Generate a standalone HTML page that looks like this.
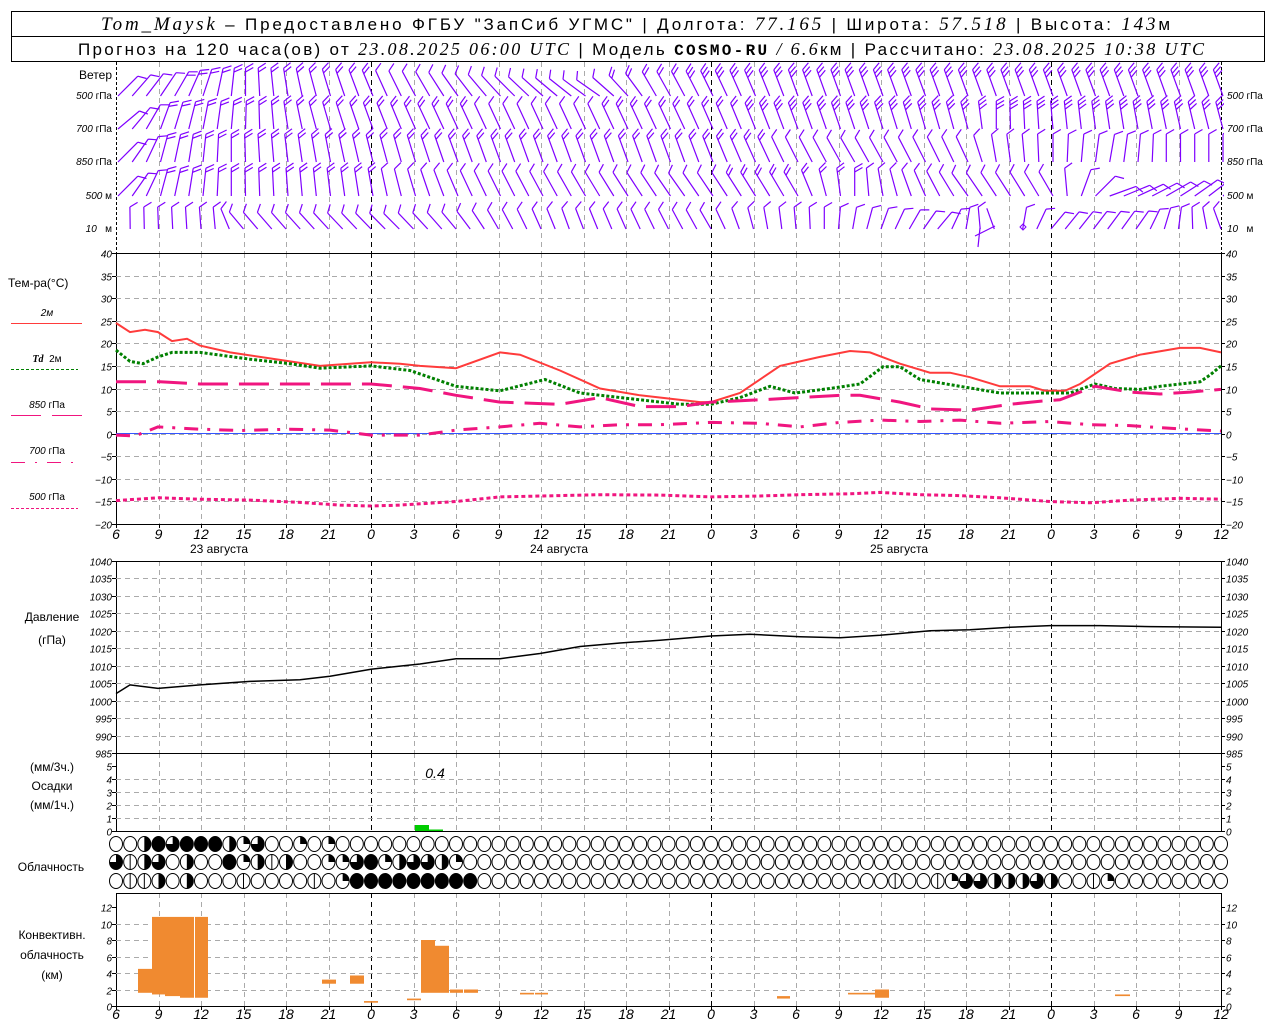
<!DOCTYPE html>
<html><head><meta charset="utf-8"><style>
html,body{margin:0;padding:0;background:#fff;width:1280px;height:1024px;overflow:hidden}
svg{display:block}
.l{font-family:"Liberation Sans",sans-serif;font-size:12px;fill:#000}
.n{font-family:"Liberation Sans",sans-serif;font-style:italic;font-size:10px;fill:#000}
.ax{font-family:"Liberation Sans",sans-serif;font-style:italic;font-size:14px;fill:#000}
.h{font-family:"Liberation Sans",sans-serif;font-size:17px;fill:#000}
.i{font-family:"Liberation Serif",serif;font-style:italic}
</style></head><body>
<svg id="s" width="1280" height="1024" xmlns="http://www.w3.org/2000/svg">
<defs><clipPath id="wc"><rect x="114" y="62" width="1110" height="190"/></clipPath></defs>
<rect x="11.5" y="11.5" width="1253" height="25" fill="none" stroke="#000"/>
<rect x="11.5" y="36.5" width="1253" height="25" fill="none" stroke="#000"/>
<text class="h" x="101" y="30" textLength="1069" lengthAdjust="spacing"><tspan class="i" font-size="19">Tom_Maysk</tspan> – Предоставлено ФГБУ "ЗапСиб УГМС" | Долгота: <tspan class="i" font-size="19">77.165</tspan> | Широта: <tspan class="i" font-size="19">57.518</tspan> | Высота: <tspan class="i" font-size="19">143</tspan>м</text>
<text class="h" x="78" y="55" textLength="1126" lengthAdjust="spacing">Прогноз на 120 часа(ов) от <tspan class="i" font-size="18">23.08.2025 06:00 UTC</tspan> | Модель <tspan font-family="Liberation Mono" font-weight="bold" font-size="16">COSMO-RU</tspan> <tspan class="i" font-size="18">/ 6.6</tspan>км | Рассчитано: <tspan class="i" font-size="18">23.08.2025 10:38 UTC</tspan></text>

<g id="grid"></g>
<g id="dyn"></g>
<g id="wind" clip-path="url(#wc)"></g>

<text class="l" x="112" y="79" text-anchor="end">Ветер</text>
<g class="n" text-anchor="end" font-size="11">
<text x="112" y="99">500 <tspan font-style="normal">гПа</tspan></text>
<text x="112" y="132">700 <tspan font-style="normal">гПа</tspan></text>
<text x="112" y="165">850 <tspan font-style="normal">гПа</tspan></text>
<text x="112" y="199">500 <tspan font-style="normal">м</tspan></text>
<text x="112" y="232">10 &#160; <tspan font-style="normal">м</tspan></text>
</g>
<g class="n" font-size="11">
<text x="1227" y="99">500 <tspan font-style="normal">гПа</tspan></text>
<text x="1227" y="132">700 <tspan font-style="normal">гПа</tspan></text>
<text x="1227" y="165">850 <tspan font-style="normal">гПа</tspan></text>
<text x="1227" y="199">500 <tspan font-style="normal">м</tspan></text>
<text x="1227" y="232">10 &#160; <tspan font-style="normal">м</tspan></text>
</g>
<text class="l" x="8" y="287">Тем-ра(°C)</text>
<text class="n" x="47" y="316" text-anchor="middle" font-style="normal" font-size="11">2м</text>
<line x1="11" y1="323.5" x2="82" y2="323.5" stroke="#ff3b3b"/>
<text class="n" x="47" y="362" text-anchor="middle" font-size="11"><tspan font-family="Liberation Serif" font-weight="bold">Td</tspan> <tspan font-style="normal">&#160;2м</tspan></text>
<line x1="11" y1="369.5" x2="78" y2="369.5" stroke="#008000" stroke-dasharray="3,2"/>
<text class="n" x="47" y="408" text-anchor="middle" font-size="11">850 <tspan font-style="normal">гПа</tspan></text>
<line x1="11" y1="415.5" x2="82" y2="415.5" stroke="#f0157f" stroke-dasharray="30,11"/>
<text class="n" x="47" y="454" text-anchor="middle" font-size="11">700 <tspan font-style="normal">гПа</tspan></text>
<line x1="11" y1="462.5" x2="78" y2="462.5" stroke="#f0157f" stroke-dasharray="14,10,2,10"/>
<text class="n" x="47" y="500" text-anchor="middle" font-size="11">500 <tspan font-style="normal">гПа</tspan></text>
<line x1="11" y1="508.5" x2="78" y2="508.5" stroke="#f0157f" stroke-dasharray="3,2"/>
<text class="l" x="52" y="621" text-anchor="middle">Давление</text>
<text class="l" x="52" y="644" text-anchor="middle">(гПа)</text>
<text class="l" x="52" y="771" text-anchor="middle">(мм/3ч.)</text>
<text class="l" x="52" y="790" text-anchor="middle">Осадки</text>
<text class="l" x="52" y="809" text-anchor="middle">(мм/1ч.)</text>
<text class="l" x="51" y="871" text-anchor="middle">Облачность</text>
<text class="l" x="52" y="939" text-anchor="middle">Конвективн.</text>
<text class="l" x="52" y="959" text-anchor="middle">облачность</text>
<text class="l" x="52" y="979" text-anchor="middle">(км)</text>
<text class="ax" x="435" y="778" text-anchor="middle" font-size="13">0.4</text>
<text class="l" x="219" y="553" text-anchor="middle" font-size="13">23 августа</text>
<text class="l" x="559" y="553" text-anchor="middle" font-size="13">24 августа</text>
<text class="l" x="899" y="553" text-anchor="middle" font-size="13">25 августа</text>
<g id="txt"></g>
</svg>
<script>
(function(){
var NS="http://www.w3.org/2000/svg";
var X0=116,X1=1221,PH=(1221-116)/78;
function xh(h){return X0+h*PH;}
var grid=document.getElementById('grid'),dyn=document.getElementById('dyn'),txt=document.getElementById('txt'),wind=document.getElementById('wind');
function el(p,t,a,s){var e=document.createElementNS(NS,t);for(var k in a)e.setAttribute(k,a[k]);if(s!=null)e.textContent=s;p.appendChild(e);return e;}
function line(p,x1,y1,x2,y2,c,d,w){var a={x1:x1,y1:y1,x2:x2,y2:y2,stroke:c||'#000','stroke-width':w||1};if(d)a['stroke-dasharray']=d;return el(p,'line',a);}
var G='#aaa';
var secs=[[62,253],[253,524],[561,753],[753,831],[893,1006]];
for(var k=0;k<=26;k++){
  var x=Math.round(xh(k*3))+.5, h=6+k*3, day=(h%24==0);
  secs.forEach(function(s,i){
    if(k==0||k==26){ if(i==0) line(grid,x,s[0],x,s[1],'#000','3,2'); else line(grid,x,s[0],x,s[1],'#000');}
    else line(grid,x,s[0],x,s[1],day?'#000':G,'5,4');
  });
}
function yaxis(top,bot,vmin,vmax,step,labs){
  var ppu=(bot-top)/(vmax-vmin);
  for(var v=vmin;v<=vmax+1e-9;v+=step){
    var y=Math.round(bot-(v-vmin)*ppu)+.5;
    if(v!=vmin&&v!=vmax) line(grid,X0,y,X1,y,G,'5,4');
    line(grid,X0-4,y,X0,y,'#000');line(grid,X1,y,X1+4,y,'#000');
    if(labs){el(txt,'text',{'class':'n',x:X0-4,y:y+4,'text-anchor':'end'},String(v).replace('-','−'));
    el(txt,'text',{'class':'n',x:X1+5,y:y+4},String(v).replace('-','−'));}
  }
}
yaxis(253,524,-20,40,5,true);
yaxis(561,753,985,1040,5,true);
yaxis(766,831,0,5,1,true);
yaxis(907,1006,0,12,2,true);
line(grid,X0,253.5,X1+4,253.5,'#000');
line(grid,X0,524.5,X1,524.5,'#000');
line(grid,X0,561.5,X1,561.5,'#000');
line(grid,X0,753.5,X1,753.5,'#000');
line(grid,X0,831.5,X1,831.5,'#000');
line(grid,X0,893.5,X1,893.5,'#000');
line(grid,X0,1006.5,X1,1006.5,'#000');
for(var k=0;k<=26;k++){var h=(6+k*3)%24;var x=xh(k*3);
  el(txt,'text',{'class':'ax',x:x,y:539,'text-anchor':'middle'},h);
  el(txt,'text',{'class':'ax',x:x,y:1019,'text-anchor':'middle'},h);
  line(grid,Math.round(x)+.5,524,Math.round(x)+.5,528,'#000');
  line(grid,Math.round(x)+.5,1006,Math.round(x)+.5,1010,'#000');
}
function yT(t){return 433.7-t*4.517;}
function yP(p){return 561+(1040-p)*3.49;}
function curve(l,fy,c,w,d){
  var s='';for(var i=0;i<l.length;i+=2){s+=(i?'L':'M')+l[i]+','+fy(l[i+1]).toFixed(1);}
  var a={d:s,fill:'none',stroke:c,'stroke-width':w};if(d)a['stroke-dasharray']=d;el(dyn,'path',a);
}
line(dyn,X0,433.5,X1,433.5,'#3355ff');
var t2=[116,24.5,130,22.5,145,23,158,22.5,172,20.5,187,21,200,19.5,230,18,260,17,290,16,320,15,371,15.8,400,15.5,420,15,456,14.5,500,18,520,17.5,560,14,600,10,640,8.5,700,7,711,7,740,9,780,15,820,17,850,18.3,870,18,900,15.5,930,13.5,950,13.5,970,12.5,1000,10.5,1030,10.5,1045,9.5,1065,9.5,1080,11,1110,15.5,1140,17.5,1180,19,1200,19,1221,18];
var td=[116,18.5,130,16,143,15.5,158,17,172,18,200,18,250,16.5,290,15.5,320,14.5,371,15,410,14,456,10.5,500,9.5,545,12,580,9,640,7.5,680,6.5,711,6.5,740,8,770,10.5,795,9,830,10,860,11,883,14.8,900,14.8,920,12,960,10.5,1000,9,1050,9,1070,9,1095,11,1115,10,1140,9.8,1160,10.5,1200,11.5,1210,13,1221,15];
var t850=[116,11.5,160,11.5,200,11,250,11,320,11,371,11,420,10,456,8.5,500,7,560,6.5,600,8,640,6,680,6,711,7,760,7.5,800,8,840,8.5,860,8.5,900,7,930,5.5,970,5.2,1010,6.5,1040,7.2,1060,7.5,1095,10.5,1130,9.2,1160,8.8,1190,9.2,1221,9.8];
var t700=[116,-0.3,135,-0.5,158,1.5,200,1,240,0.7,290,1,330,0.8,371,-0.3,420,-0.3,456,0.8,500,1.5,540,2.3,580,1.5,620,2,660,2,711,2.5,760,2.3,800,1.5,840,2.5,880,3,920,2.7,960,3,1000,2.3,1050,2.7,1090,2,1130,1.8,1170,1.2,1221,0.6];
var t500=[116,-14.8,158,-14.2,200,-14.5,250,-14.7,300,-15.2,340,-15.8,371,-16,400,-15.8,456,-15,500,-14,560,-13.7,600,-13.5,660,-13.6,711,-14,760,-13.8,800,-13.5,850,-13.3,880,-13,920,-13.5,960,-13.7,1000,-14.2,1050,-15,1090,-15.3,1130,-14.7,1180,-14.3,1221,-14.5];
curve(t2,yT,'#ff3b3b',2);
curve(td,yT,'#008000',3,'3,2');
curve(t850,yT,'#f0157f',3,'30,11');
curve(t700,yT,'#f0157f',3,'14,9,3,9');
curve(t500,yT,'#f0157f',3,'4,3');
var pr=[116,1002,130,1004.5,158,1003.5,200,1004.5,250,1005.5,300,1006,330,1007,371,1009,420,1010.5,456,1012,500,1012,540,1013.5,580,1015.5,620,1016.5,660,1017.3,711,1018.5,750,1019,800,1018.3,840,1018,880,1018.7,930,1020,970,1020.3,1010,1021,1050,1021.5,1100,1021.5,1150,1021.2,1221,1021];
curve(pr,yP,'#000',1.5);
el(dyn,'rect',{x:415,y:825,width:14,height:6,fill:'#00cc00'});
el(dyn,'rect',{x:429,y:829.5,width:14,height:1.5,fill:'#00cc00'});
function yK(k){return 1006-k*8.25;}
[[138,152,4.5,1.6],[152,165,10.8,1.4],[165,180,10.8,1.2],[180,194,10.8,1],[195,208,10.8,1],[322,336,3.2,2.7],[350,364,3.7,2.7],[364,378,0.6,0.4],[407,421,0.9,0.7],[421,435,8,1.6],[435,449,7.3,1.6],[450,463,2,1.6],[464,478,2,1.6],[520,534,1.6,1.4],[535,548,1.6,1.4],[777,790,1.2,0.9],[848,875,1.6,1.4],[875,889,2,1],[1115,1130,1.4,1.2]].forEach(function(b){
  el(dyn,'rect',{x:b[0],y:yK(b[2]),width:b[1]-b[0],height:yK(b[3])-yK(b[2]),fill:'#f08a30'});
});
function rowStr(s){var a=[];for(var i=0;i<79;i++)a.push(i<s.length?s[i]:'0');return a;}
var r1=rowStr('0024344421300101');
var r2=rowStr('3v230200412v2001134123321');
var r3=rowStr('0vv202000v0000v014444444440');
var r3b='0v00v1332223200v1';for(var i=0;i<r3b.length;i++)r3[54+i]=r3b[i];
function circ(cx,cy,f){
  var rx=6.5,ry=7.5;
  el(dyn,'ellipse',{cx:cx,cy:cy,rx:rx,ry:ry,fill:'#fff',stroke:'#000','stroke-width':1});
  if(f=='v'){line(dyn,cx,cy-ry,cx,cy+ry,'#000');return;}
  var q=+f;if(!q)return;
  if(q==4){el(dyn,'ellipse',{cx:cx,cy:cy,rx:rx,ry:ry,fill:'#000'});return;}
  var d='M'+cx+','+cy+'L'+cx+','+(cy-ry);
  var ang=q*Math.PI/2;
  var ex=cx+rx*Math.sin(ang),ey=cy-ry*Math.cos(ang);
  d+='A'+rx+','+ry+' 0 '+(q>2?1:0)+' 1 '+ex.toFixed(1)+','+ey.toFixed(1)+'Z';
  el(dyn,'path',{d:d,fill:'#000'});
}
for(var i=0;i<79;i++){var cx=xh(i);circ(cx,844,r1[i]);circ(cx,862,r2[i]);circ(cx,881,r3[i]);}
function interp(kp,k){for(var j=0;j<kp.length-1;j++){var a=kp[j],b=kp[j+1];if(k>=a[0]&&k<=b[0]){return a[1]+(b[1]-a[1])*(k-a[0])/(b[0]-a[0]||1);}}return kp[kp.length-1][1];}
var rows=[
 {y:96,L:28,th:[[0,45],[4,30],[9,0],[14,-15],[22,-30],[28,-45],[34,-55],[38,-30],[48,-20],[78,-20]],sp:[[0,1],[8,2],[14,2],[22,1],[34,1],[38,2],[44,3],[78,3]]},
 {y:129,L:28,th:[[0,50],[3,20],[8,5],[14,-15],[22,-25],[40,-25],[48,-20],[60,-15],[62,0],[66,-5],[78,-15]],sp:[[0,1],[6,2],[20,2],[30,1],[40,2],[50,3],[78,3]]},
 {y:162,L:28,th:[[0,45],[3,15],[8,0],[14,-10],[24,-20],[40,-20],[52,-30],[60,-25],[62,-10],[66,0],[70,10],[74,0],[78,0]],sp:[[0,1],[6,2],[24,2],[40,2],[52,1],[62,1],[78,1]]},
 {y:196,L:28,th:[[0,45],[3,15],[8,0],[18,-10],[25,-25],[40,-35],[48,-30],[52,0],[56,-20],[60,-35],[66,-30],[70,70],[78,50]],sp:[[0,1],[6,2],[16,2],[20,1],[40,1],[48,2],[56,1],[78,1]]},
 {y:229,L:22,th:[[0,0],[7,-5],[9,-40],[20,-45],[24,-40],[27,-30],[32,-20],[42,-30],[46,-10],[50,0],[54,20],[58,40],[62,-20],[66,40],[72,35],[78,-20]],sp:[[0,1],[7,1],[9,1],[60,1],[62,0],[64,1],[78,1]]}
];
var P='#7f00ff';
rows.forEach(function(r,ri){
  for(var k=0;k<79;k++){
    if(ri==4&&(k==0||k==63))continue;
    var th=interp(r.th,k)*Math.PI/180,n=Math.round(interp(r.sp,k));
    var bx=xh(k)+(ri==4?0:2),by=r.y;
    var ux=Math.sin(th),uy=-Math.cos(th);
    var tx=bx+ux*r.L,ty=by+uy*r.L;
    var d='M'+bx.toFixed(1)+','+by+'L'+tx.toFixed(1)+','+ty.toFixed(1);
    var a=60*Math.PI/180,fx=ux*Math.cos(a)-uy*Math.sin(a),fy=ux*Math.sin(a)+uy*Math.cos(a);
    for(var j=0;j<n;j++){
      var sx=tx-ux*4*j,sy=ty-uy*4*j;
      d+='M'+sx.toFixed(1)+','+sy.toFixed(1)+'L'+(sx+fx*9).toFixed(1)+','+(sy+fy*9).toFixed(1);
    }
    el(wind,'path',{d:d,fill:'none',stroke:P,'stroke-width':1.2});
  }
});
el(wind,'path',{d:'M978,247L980,228M975,236L995,226',fill:'none',stroke:P,'stroke-width':1.2});
el(wind,'path',{d:'M1023,224L1026,227L1023,230L1020,227Z',fill:'none',stroke:P});
})();
</script>
</body></html>
